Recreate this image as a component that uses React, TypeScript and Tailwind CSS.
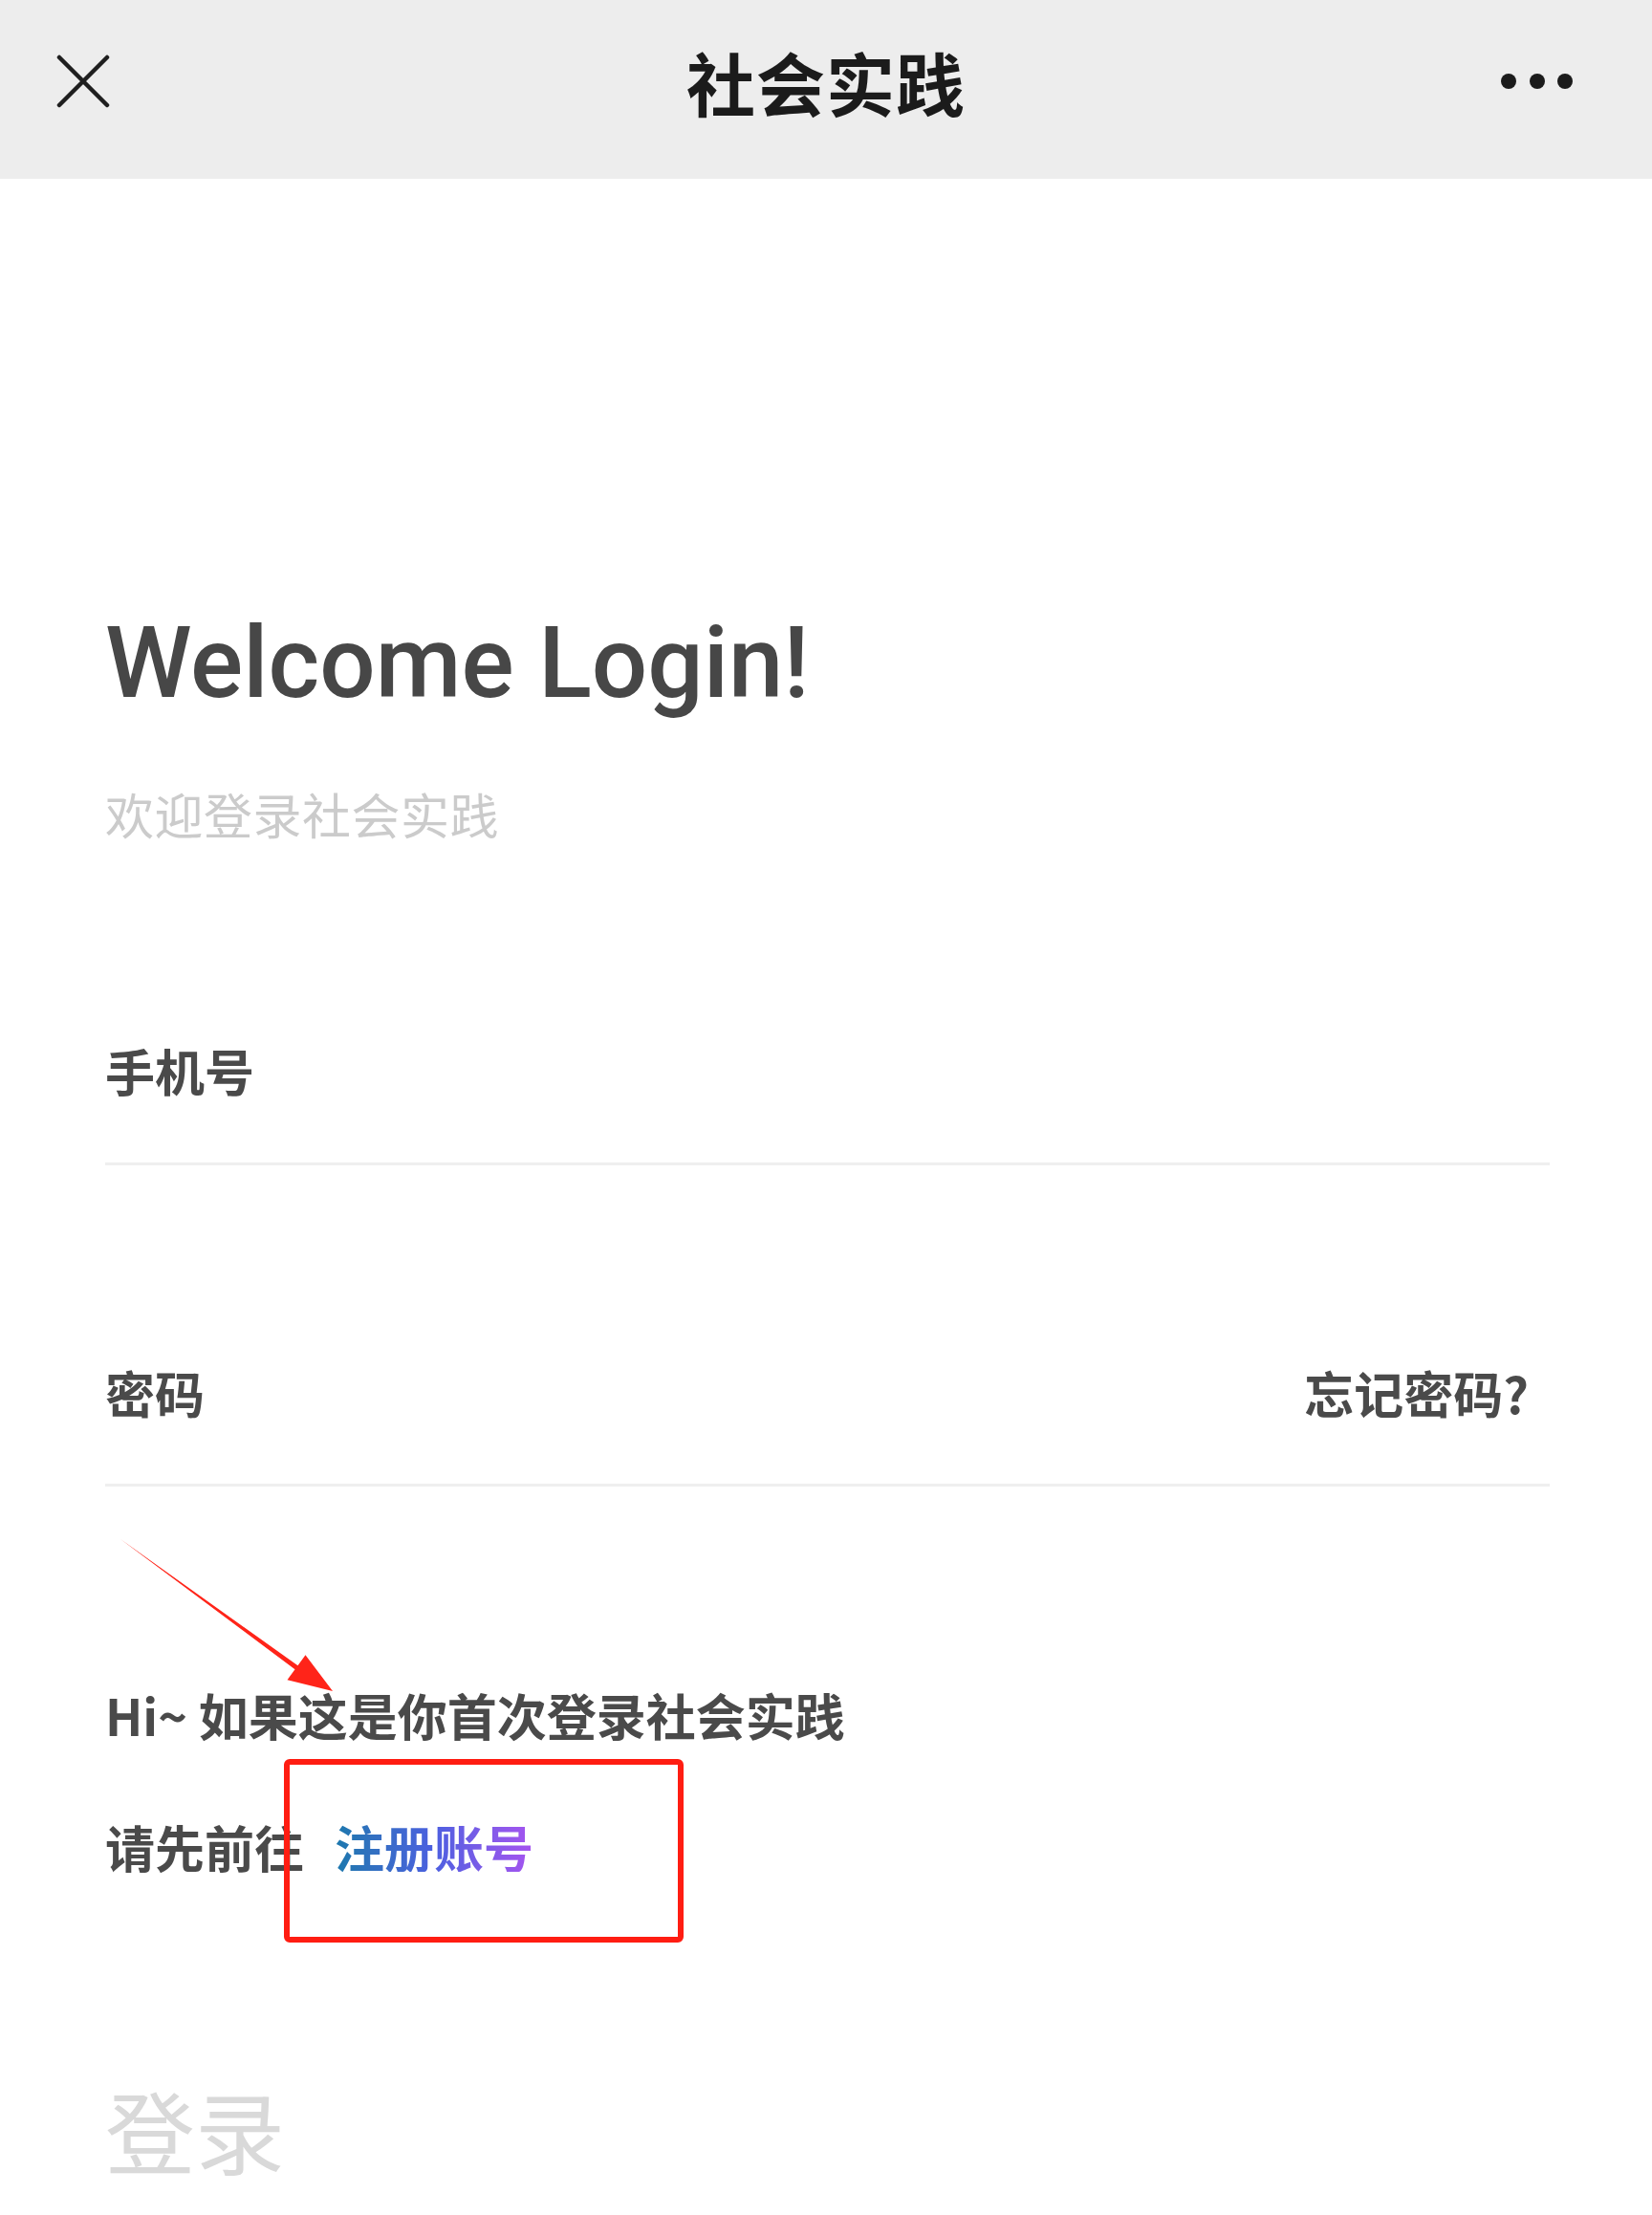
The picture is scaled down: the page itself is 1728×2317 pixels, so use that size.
import React from "react";

const cjk = { fontFamily: '"Noto Sans CJK SC", "Noto Sans", sans-serif' };

export default function App() {
  return (
    <div className="relative w-full min-h-[2317px] bg-white" style={cjk}>
      {/* Header */}
      <div className="grid h-[187px] grid-cols-[1fr_auto_1fr] items-center bg-[#ededed] pb-[18px] px-[59px]">
        <div className="flex items-center">
          <svg width="56" height="56" viewBox="0 0 56 56" fill="none">
            <path d="M3 3 L53 53 M53 3 L3 53" stroke="#1f1f1f" strokeWidth="4.5" strokeLinecap="round" />
          </svg>
        </div>
        <div className="text-[72px] font-bold leading-none tracking-[1px] text-[#1b1b1b]">社会实践</div>
        <div className="flex items-center justify-end gap-[13.5px] pr-[24px]">
          <span className="h-[16px] w-[16px] rounded-full bg-[#1b1b1b]" />
          <span className="h-[16px] w-[16px] rounded-full bg-[#1b1b1b]" />
          <span className="h-[16px] w-[16px] rounded-full bg-[#1b1b1b]" />
        </div>
      </div>

      {/* Content */}
      <div className="flex flex-col pl-[110px] pr-[107px]">
        <div
          className="mt-[455px] text-[103px] font-medium leading-none text-[#474747]"
          style={{ fontFamily: 'Roboto, "Noto Sans", sans-serif' }}
        >
          Welcome Login!
        </div>
        <div className="mt-[81px] text-[51px] leading-none tracking-[0.5px] text-[#cbcbcb]">欢迎登录社会实践</div>

        <div className="mt-[217px] text-[52px] font-bold leading-none text-[#4a4a4a]">手机号</div>
        <div className="mt-[70px] h-[3px] bg-[#efefef]" />

        <div className="mt-[212px] flex items-center justify-between pr-[22px] text-[52px] font-bold leading-none text-[#4a4a4a]">
          <span>密码</span>
          <span>忘记密码?</span>
        </div>
        <div className="mt-[69px] h-[3px] bg-[#efefef]" />

        <div className="mt-[213px] text-[52px] font-bold leading-none text-[#4a4a4a]">Hi~ 如果这是你首次登录社会实践</div>
        <div className="mt-[86px] flex items-center text-[52px] font-bold leading-none">
          <span className="text-[#4a4a4a]">请先前往</span>
          <span className="ml-[32px] bg-linear-to-r from-[#1a78ad] via-[#4b5fe0] to-[#a653f0] bg-clip-text text-transparent">
            注册账号
          </span>
        </div>

        <div className="mt-[222px] text-[94px] leading-none text-[#d9d9d9]">登录</div>
      </div>

      {/* Annotation: red box */}
      <div className="pointer-events-none absolute left-[297px] top-[1840px] h-[192px] w-[418px] rounded-[6px] border-[6px] border-[#ff1d12]" />

      {/* Annotation: arrow */}
      <svg
        className="pointer-events-none absolute left-[120px] top-[1600px]"
        width="240"
        height="180"
        viewBox="0 0 240 180"
      >
        <polygon
          points="6,10 191.5,142.2 199.5,131.2 228,169 180.5,157.3 188.5,146.3"
          fill="#ff2419"
        />
      </svg>
    </div>
  );
}
